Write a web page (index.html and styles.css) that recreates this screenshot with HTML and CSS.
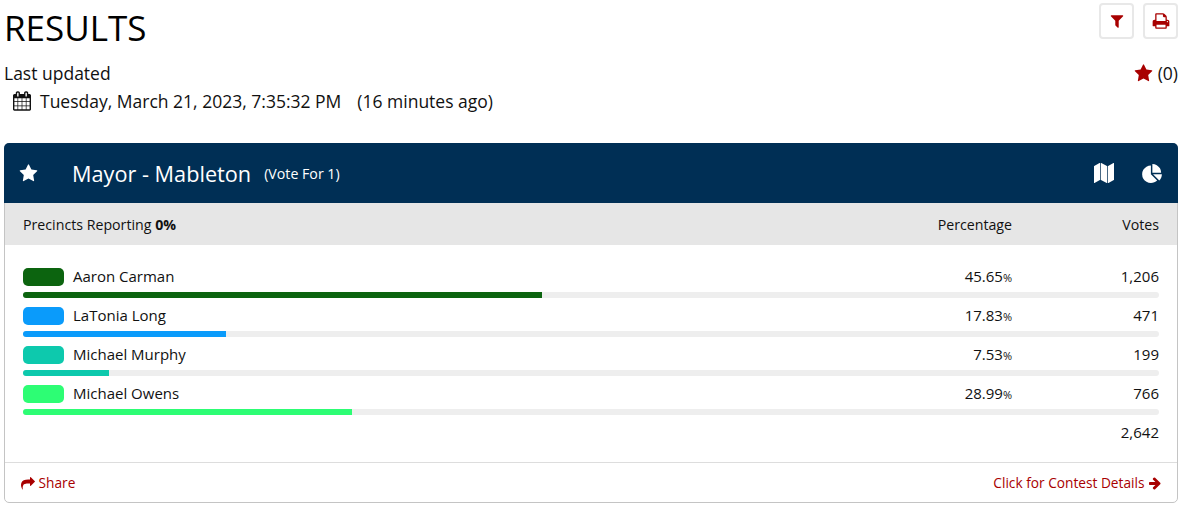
FILE: index.html
```html
<!DOCTYPE html>
<html lang="en">
<head>
<meta charset="UTF-8">
<meta name="viewport" content="width=device-width, initial-scale=1.0">
<title>Results</title>
<link rel="stylesheet" href="styles.css">
</head>
<body>

<svg class="icon-defs" aria-hidden="true">
  <symbol id="i-star" viewBox="0 0 1792 1792"><path d="M1728 647q0 22-26 48l-363 354 86 500q1 7 1 20 0 21-10.5 35.5t-30.5 14.5q-19 0-40-12l-449-236-449 236q-22 12-40 12-21 0-31.5-14.5t-10.5-35.5q0-6 2-20l86-500-364-354q-25-27-25-48 0-37 56-46l502-73 225-455q19-41 49-41t49 41l225 455 502 73q56 9 56 46z"/></symbol>
  <symbol id="i-filter" viewBox="0 0 1792 1792"><path d="M1595 295q17 41-14 70l-493 493v742q0 42-39 59-13 5-25 5-27 0-45-19l-256-256q-19-19-19-45v-486l-493-493q-31-29-14-70 17-39 59-39h1280q42 0 59 39z"/></symbol>
  <symbol id="i-print" viewBox="0 0 1792 1792"><path d="M448 1536h896v-256h-896v256zm0-640h896v-384h-160q-40 0-68-28t-28-68v-160h-640v640zm1152 64q0-26-19-45t-45-19-45 19-19 45 19 45 45 19 45-19 19-45zm128 0v416q0 13-9.5 22.5t-22.5 9.5h-224v160q0 40-28 68t-68 28h-960q-40 0-68-28t-28-68v-160h-224q-13 0-22.5-9.5t-9.5-22.5v-416q0-79 56.5-135.5t135.5-56.5h64v-544q0-40 28-68t68-28h672q40 0 88 20t76 48l152 152q28 28 48 76t20 88v256h64q79 0 135.5 56.5t56.5 135.5z"/></symbol>
  <symbol id="i-calendar" viewBox="0 0 1664 1792"><path d="M128 1664h288v-288h-288v288zm352 0h320v-288h-320v288zm-352-352h288v-320h-288v320zm352 0h320v-320h-320v320zm-352-384h288v-288h-288v288zm736 736h320v-288h-320v288zm-384-736h320v-288h-320v288zm768 736h288v-288h-288v288zm-384-352h320v-320h-320v320zm-352-864v-288q0-13-9.5-22.5t-22.5-9.5h-64q-13 0-22.5 9.5t-9.5 22.5v288q0 13 9.5 22.5t22.5 9.5h64q13 0 22.5-9.5t9.5-22.5zm736 864h288v-320h-288v320zm-384-384h320v-288h-320v288zm384 0h288v-288h-288v288zm32-480v-288q0-13-9.5-22.5t-22.5-9.5h-64q-13 0-22.5 9.5t-9.5 22.5v288q0 13 9.5 22.5t22.5 9.5h64q13 0 22.5-9.5t9.5-22.5zm384-64v1280q0 52-38 90t-90 38h-1408q-52 0-90-38t-38-90v-1280q0-52 38-90t90-38h128v-96q0-66 47-113t113-47h64q66 0 113 47t47 113v96h384v-96q0-66 47-113t113-47h64q66 0 113 47t47 113v96h128q52 0 90 38t38 90z"/></symbol>
  <symbol id="i-map" viewBox="0 0 1792 1792"><path d="M512 0q13 0 22.5 9.5t9.5 22.5v1472q0 20-17 28l-480 256q-7 4-15 4-13 0-22.5-9.5t-9.5-22.5v-1472q0-20 17-28l480-256q7-4 15-4zm1248 0q13 0 22.5 9.5t9.5 22.5v1472q0 20-17 28l-480 256q-7 4-15 4-13 0-22.5-9.5t-9.5-22.5v-1472q0-20 17-28l480-256q7-4 15-4zm-1120 0q8 0 14 3l512 256q18 10 18 29v1472q0 13-9.5 22.5t-22.5 9.5q-8 0-14-3l-512-256q-18-10-18-29v-1472q0-13 9.5-22.5t22.5-9.5z"/></symbol>
  <symbol id="i-pie" viewBox="0 0 1728 1664"><path d="M768 890l546 546q-106 108-247.5 168t-298.5 60q-209 0-385.5-103t-279.5-279.5-103-385.5 103-385.5 279.5-279.5 385.5-103v762zm187 6h773q0 157-60 298.5t-168 247.5zm709-128h-768v-768q209 0 385.5 103t279.5 279.5 103 385.5z"/></symbol>
  <symbol id="i-share" viewBox="0 0 1792 1792"><path d="M1792 704q0 26-19 45l-512 512q-19 19-45 19t-45-19-19-45v-256h-224q-98 0-175.5 6t-154 21.5-133 42.5-105.5 69.5-80 101-48.5 138-17.5 181q0 55 5 123 0 6 2.5 23.5t2.5 26.5q0 15-8.5 25t-23.5 10q-16 0-28-17-7-9-13-22t-13.5-30-10.5-24q-127-285-127-451 0-199 53-333 162-403 875-403h224v-256q0-26 19-45t45-19 45 19l512 512q19 19 19 45z"/></symbol>
  <symbol id="i-arrow" viewBox="0 0 1792 1792"><path d="M1600 960q0 54-37 91l-651 651q-39 37-91 37-51 0-90-37l-75-75q-38-38-38-91t38-91l293-293h-704q-52 0-84.5-37.5t-32.5-90.5v-128q0-53 32.5-90.5t84.5-37.5h704l-293-294q-38-36-38-90t38-90l75-75q38-38 90-38 53 0 91 38l651 651q37 35 37 90z"/></symbol>
</svg>

<main class="page">
  <!-- Page heading -->
  <header class="page-head">
    <div class="head-left">
      <h1>RESULTS</h1>
      <p class="updated-label">Last updated</p>
      <p class="updated-date">
        <svg class="cal-icon"><use href="#i-calendar"/></svg>
        <span>Tuesday, March 21, 2023, 7:35:32 PM</span>
        <span class="ago">(16 minutes ago)</span>
      </p>
    </div>
    <div class="head-right">
      <div class="tools">
        <a class="tool-btn" href="#"><svg class="tool-icon"><use href="#i-filter"/></svg></a>
        <a class="tool-btn" href="#"><svg class="print-icon"><use href="#i-print"/></svg></a>
      </div>
      <p class="fav-count"><svg class="fav-icon"><use href="#i-star"/></svg> (0)</p>
    </div>
  </header>

  <!-- Contest card -->
  <section class="card">
    <div class="card-title">
      <svg class="title-star"><use href="#i-star"/></svg>
      <h2>Mayor - Mableton</h2>
      <span class="vote-for">(Vote For 1)</span>
      <svg class="map-icon"><use href="#i-map"/></svg>
      <svg class="pie-icon"><use href="#i-pie"/></svg>
    </div>

    <div class="card-sub">
      <span class="col-name">Precincts Reporting <b>0%</b></span>
      <span class="col-pct">Percentage</span>
      <span class="col-votes">Votes</span>
    </div>

    <div class="card-body">
      <div class="cand">
        <div class="cand-row">
          <span class="swatch c-green"></span>
          <span class="col-name">Aaron Carman</span>
          <span class="col-pct">45.65<small>%</small></span>
          <span class="col-votes">1,206</span>
        </div>
        <div class="bar"><div class="bar-fill c-green" style="width: 45.65%"></div></div>
      </div>
      <div class="cand">
        <div class="cand-row">
          <span class="swatch c-blue"></span>
          <span class="col-name">LaTonia Long</span>
          <span class="col-pct">17.83<small>%</small></span>
          <span class="col-votes">471</span>
        </div>
        <div class="bar"><div class="bar-fill c-blue" style="width: 17.83%"></div></div>
      </div>
      <div class="cand">
        <div class="cand-row">
          <span class="swatch c-teal"></span>
          <span class="col-name">Michael Murphy</span>
          <span class="col-pct">7.53<small>%</small></span>
          <span class="col-votes">199</span>
        </div>
        <div class="bar"><div class="bar-fill c-teal" style="width: 7.53%"></div></div>
      </div>
      <div class="cand">
        <div class="cand-row">
          <span class="swatch c-mint"></span>
          <span class="col-name">Michael Owens</span>
          <span class="col-pct">28.99<small>%</small></span>
          <span class="col-votes">766</span>
        </div>
        <div class="bar"><div class="bar-fill c-mint" style="width: 28.99%"></div></div>
      </div>
      <div class="total">2,642</div>
    </div>

    <div class="card-foot">
      <a href="#"><svg class="share-icon"><use href="#i-share"/></svg> Share</a>
      <a href="#">Click for Contest Details <svg class="arrow-icon"><use href="#i-arrow"/></svg></a>
    </div>
  </section>
</main>

</body>
</html>
```

FILE: styles.css
```css
/* General styles */
body {
  font-family: 'Open Sans', 'Noto Sans', sans-serif;
  margin: 0;
  padding: 0;
  background-color: #fff;
  color: #111;
}

a {
  color: #a80000;
  text-decoration: none;
}

p {
  margin: 0;
}

svg {
  fill: currentColor;
}

.icon-defs {
  display: none;
}

.page {
  padding: 0 22px 0 4px;
  height: 512px;
  box-sizing: border-box;
  overflow: hidden;
}

/* Page heading */
.page-head {
  display: flex;
  justify-content: space-between;
  height: 143px;
}

.page-head h1 {
  font-size: 35px;
  font-weight: 400;
  line-height: 46px;
  margin: 5px 0 0;
  color: #000;
}

.updated-label {
  font-size: 17.5px;
  line-height: 24px;
  margin-top: 10px;
}

.updated-date {
  display: flex;
  align-items: center;
  font-size: 17.5px;
  line-height: 24px;
  margin: 4px 0 0 9px;
}

.cal-icon {
  width: 18px;
  height: 20px;
  margin-right: 9px;
}

.ago {
  margin-left: 16px;
}

.head-right {
  display: flex;
  flex-direction: column;
  align-items: flex-end;
}

.tools {
  display: flex;
  gap: 9px;
  margin-top: 3px;
}

.tool-btn {
  display: flex;
  align-items: center;
  justify-content: center;
  width: 31px;
  height: 32px;
  border: 2px solid #e8e8e8;
  border-radius: 4px;
}

.tool-icon {
  width: 16px;
  height: 16px;
}

.print-icon {
  width: 18px;
  height: 18px;
}

.fav-count {
  display: flex;
  align-items: center;
  gap: 5px;
  font-size: 17.5px;
  line-height: 24px;
  margin-top: 22px;
}

.fav-icon {
  width: 19px;
  height: 19px;
  color: #a80000;
}

/* Contest card */
.card {
  border: 1px solid #c4c4c4;
  border-radius: 5px;
  height: 360px;
  box-sizing: border-box;
  display: flex;
  flex-direction: column;
}

.card-title {
  display: flex;
  align-items: center;
  height: 60px;
  flex: none;
  margin: -1px -1px 0;
  padding: 0 16px 0 15px;
  background-color: #002f55;
  color: #fff;
  border-radius: 5px 5px 0 0;
}

.title-star {
  width: 19px;
  height: 19px;
}

.card-title h2 {
  font-size: 21.7px;
  font-weight: 400;
  margin: 0 13px 0 34px;
  padding-top: 1px;
}

.vote-for {
  font-size: 14.2px;
  padding-top: 1px;
  flex: 1;
}

.map-icon {
  width: 20px;
  height: 20px;
  margin-right: 28px;
}

.pie-icon {
  width: 20px;
  height: 19px;
}

.card-sub {
  display: flex;
  align-items: center;
  flex: none;
  height: 42px;
  padding: 0 18px;
  background-color: #e6e6e6;
  font-size: 14.2px;
  box-sizing: border-box;
}

.col-name {
  flex: 1;
}

.col-pct {
  width: 150px;
  text-align: right;
}

.col-votes {
  width: 147px;
  text-align: right;
}

.card-body {
  flex: 1;
  padding: 21px 18px 0;
  font-size: 15px;
}

.cand {
  height: 39px;
}

.cand-row {
  display: flex;
  align-items: center;
  height: 20px;
}

.cand-row small {
  font-size: 11px;
}

.swatch {
  width: 41px;
  height: 18px;
  border-radius: 5px;
  margin: 2px 9px 0 0;
}

.bar {
  height: 6px;
  margin-top: 6px;
  background-color: #eee;
  border-radius: 3px;
  overflow: hidden;
}

.bar-fill {
  height: 100%;
}

.c-green { background-color: #0c640f; }
.c-blue { background-color: #0a9bfb; }
.c-teal { background-color: #0dc9ad; }
.c-mint { background-color: #2dfd74; }

.total {
  text-align: right;
  line-height: 20px;
}

.card-foot {
  display: flex;
  justify-content: space-between;
  align-items: center;
  flex: none;
  height: 39px;
  padding: 0 15px 0 16px;
  border-top: 1px solid #ddd;
  font-size: 13.7px;
}

.share-icon,
.arrow-icon {
  width: 14px;
  height: 14px;
  vertical-align: -2px;
}
```
